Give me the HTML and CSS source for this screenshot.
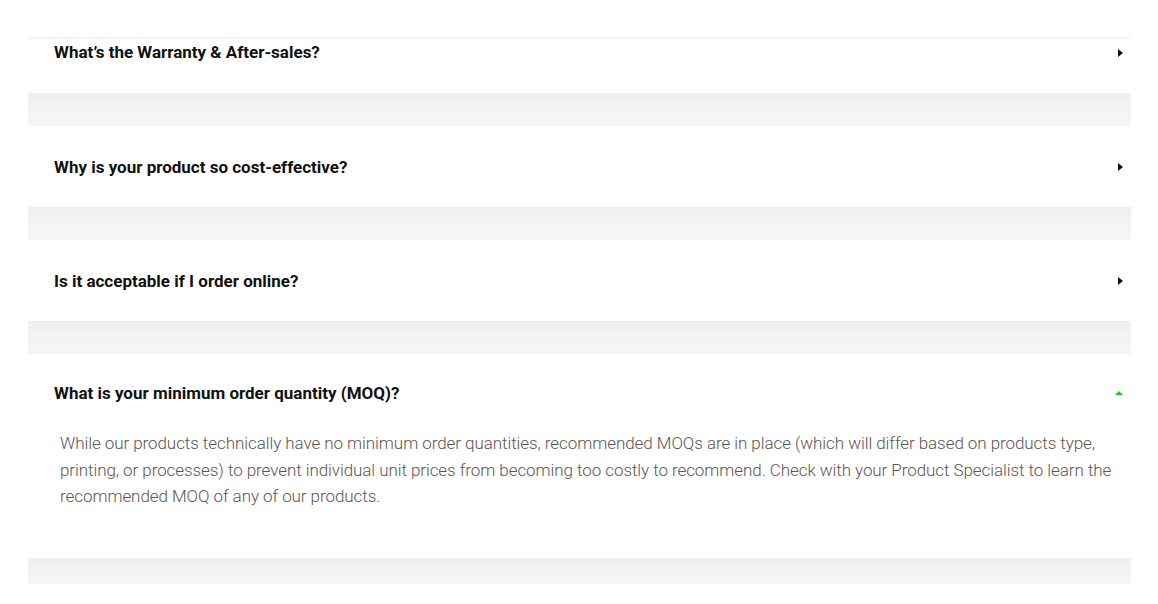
FILE: index.html
```html
<!DOCTYPE html>
<html lang="en">
<head>
<meta charset="utf-8">
<title>FAQ</title>
<link rel="stylesheet" href="styles.css">
</head>
<body>
<div class="faq">
  <div class="edge"></div>
  <div class="item">
    <div class="q q-cut"><span class="q-text">What’s the Warranty &amp; After-sales?</span><span class="caret"></span></div>
    <div class="band"></div>
  </div>
  <div class="item">
    <div class="q"><span class="q-text">Why is your product so cost-effective?</span><span class="caret"></span></div>
    <div class="band"></div>
  </div>
  <div class="item">
    <div class="q"><span class="q-text">Is it acceptable if I order online?</span><span class="caret"></span></div>
    <div class="band"></div>
  </div>
  <div class="item open">
    <div class="q q-open"><span class="q-text">What is your minimum order quantity (MOQ)?</span><span class="caret caret-up"></span></div>
    <div class="a">While our products technically have no minimum order quantities, recommended MOQs are in place (which will differ based on products type, printing, or processes) to prevent individual unit prices from becoming too costly to recommend. Check with your Product Specialist to learn the recommended MOQ of any of our products.</div>
    <div class="band band-last"></div>
  </div>
</div>
</body>
</html>
```

FILE: styles.css
```css
html, body {
  margin: 0;
  padding: 0;
  background: #ffffff;
}
body {
  padding-top: 37px;
  font-family: Roboto, "Liberation Sans", Arial, sans-serif;
}
.faq {
  width: 1103px;
  margin-left: 28px;
}
.edge {
  height: 2px;
  background: linear-gradient(#fafafa, #efefef);
}
.q {
  height: 81px;
  display: flex;
  align-items: center;
  justify-content: space-between;
  padding: 0 4px 0 26px;
  box-sizing: border-box;
  background: #fff;
}
.q-cut {
  height: 54px;
  align-items: flex-start;
  padding-top: 3px;
}
.q-open {
  height: 76px;
  padding-top: 2px;
}
.q-text {
  font-size: 17px;
  font-weight: 700;
  color: #111;
  line-height: 20px;
  letter-spacing: 0;
}
.q-cut .caret {
  margin-top: 7px;
}
.caret {
  width: 0;
  height: 0;
  border-top: 4px solid transparent;
  border-bottom: 4px solid transparent;
  border-left: 5px solid #111;
  margin-right: 4px;
}
.caret-up {
  border-left: 4px solid transparent;
  border-right: 4px solid transparent;
  border-top: 0;
  border-bottom: 4px solid #1fcc1f;
  margin-right: 4px;
}
.a {
  background: #fff;
  padding: 0 14px 48px 32px;
  font-size: 17px;
  font-weight: 300;
  line-height: 26.5px;
  letter-spacing: -0.07px;
  color: #5e5555;
}
.band {
  height: 33px;
  background: linear-gradient(#eeeeee, #f3f3f3 40%, #f6f6f6);
}
.band-last {
  height: 26px;
}
```
